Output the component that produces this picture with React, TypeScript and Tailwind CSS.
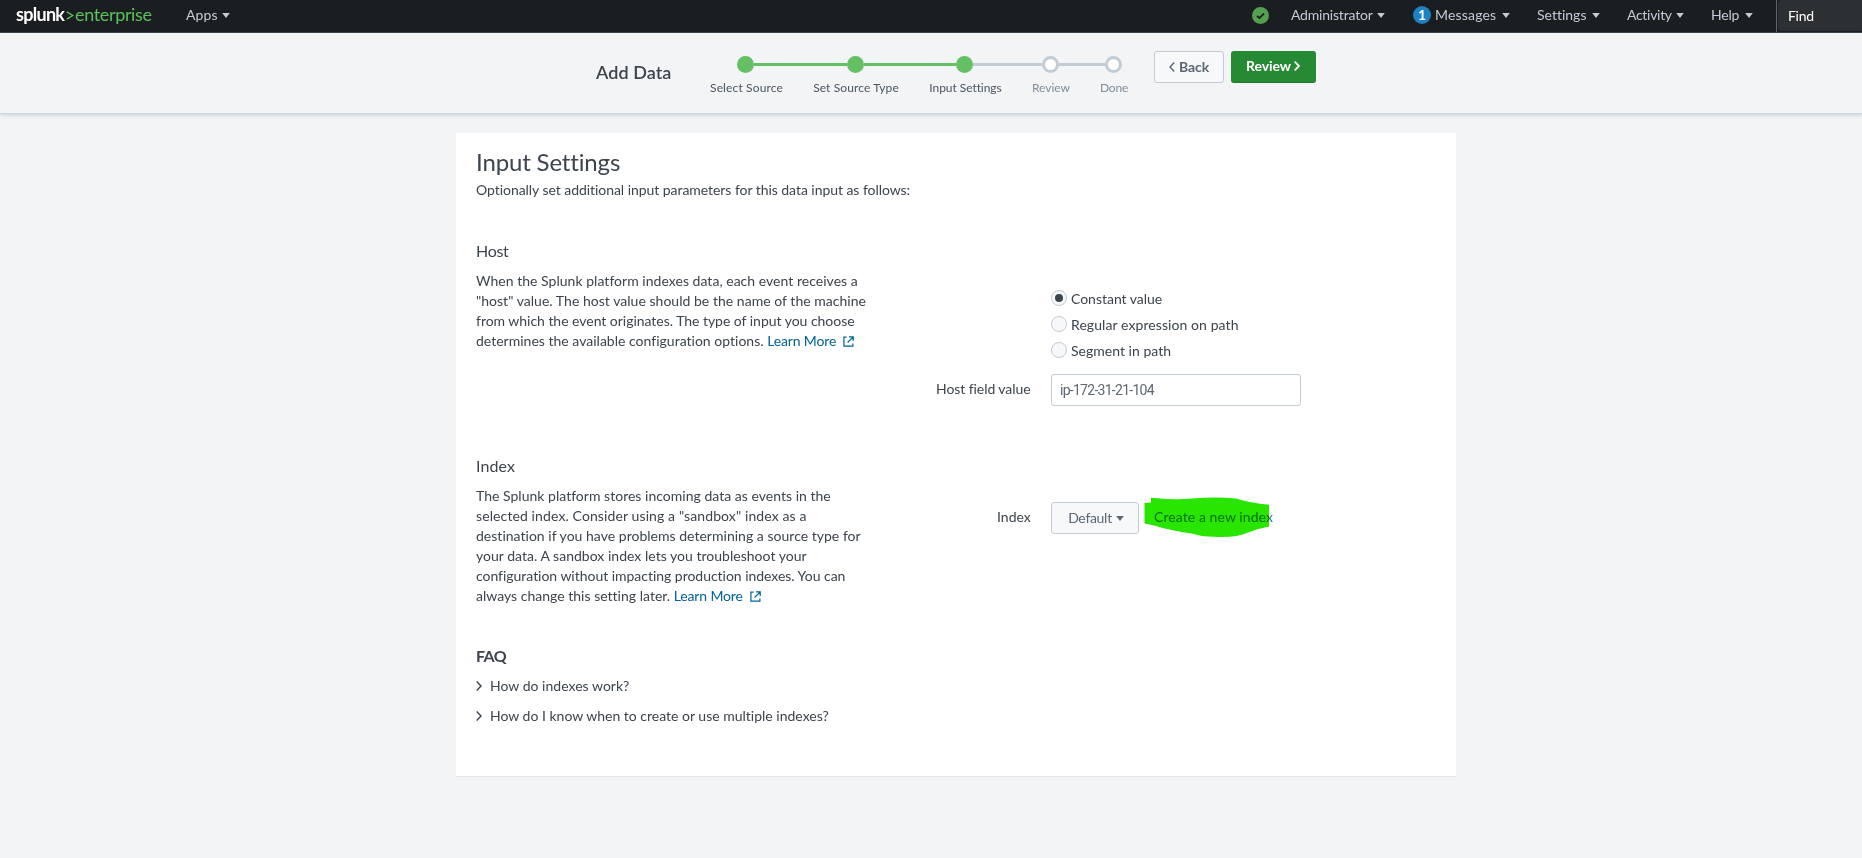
import type { ReactNode } from "react";

function Caret({ className = "" }: { className?: string }) {
  return (
    <svg className={className} width="8" height="5" viewBox="0 0 8 5" fill="currentColor">
      <path d="M0.2 0h7.6L4 5z" />
    </svg>
  );
}

function External() {
  return (
    <svg className="ml-[7px] inline-block align-[-1px]" width="11" height="11" viewBox="0 0 11 11" fill="none" stroke="currentColor" strokeWidth="1.2">
      <path d="M3.6 1.2H0.9v8.9h9V7.4M6 0.9h4.2v4.2M10 1.1L4.6 6.5" />
    </svg>
  );
}

function Chevron({ left = false, className = "", weight = 1.4 }: { left?: boolean; className?: string; weight?: number }) {
  return (
    <svg className={className} width="6" height="10" viewBox="0 0 6 10" fill="none" stroke="currentColor" strokeWidth={weight}>
      <path d={left ? "M5.3 0.6L1 5l4.3 4.4" : "M0.7 0.6L5 5L0.7 9.4"} />
    </svg>
  );
}

function NavItem({ label, className }: { label: string; className: string }) {
  return (
    <div className={`flex items-center justify-between ${className}`}>
      <span className="pb-px">{label}</span>
      <Caret className="text-[#c3cbd4]" />
    </div>
  );
}

function TopBar() {
  return (
    <header className="flex h-[33px] shrink-0 border-b border-[#3c444d] bg-[#1a1e21] text-[14px] text-[#c3cbd4]">
      <div className="flex h-[30px] items-center pl-4">
        <div className="flex items-center text-[18px] leading-none">
          <span className="w-[50px] pb-[3px] font-bold tracking-[-0.72px] text-white">splunk</span>
          <svg className="mr-px" width="8" height="11" viewBox="0 0 9 11" fill="none" stroke="#5cc05c" strokeWidth="1.6">
            <path d="M1 1.4l6.6 4.1L1 9.6" />
          </svg>
          <span className="w-[79px] pb-[3px] tracking-[-0.35px] text-[#5cc05c]">enterprise</span>
        </div>
        <NavItem label="Apps" className="ml-8 w-[44px] tracking-[0.1px]" />
      </div>
      <nav className="ml-auto flex h-[30px] items-center">
        <svg className="mr-[22px]" width="17" height="17" viewBox="0 0 17 17">
          <circle cx="8.5" cy="8.5" r="8.5" fill="#53a051" />
          <path d="M5 8.8l2.5 2.3L12 6.3" fill="none" stroke="#1a1e21" strokeWidth="1.8" />
        </svg>
        <NavItem label="Administrator" className="w-[94px] tracking-[-0.2px]" />
        <span className="ml-7 mr-[4px] flex size-[18px] items-center justify-center rounded-full bg-[#1e81c4] font-bold text-white">1</span>
        <NavItem label="Messages" className="w-[75px] tracking-[0.18px]" />
        <NavItem label="Settings" className="ml-[27px] w-[63px]" />
        <NavItem label="Activity" className="ml-[27px] w-[57px] tracking-[-0.3px]" />
        <NavItem label="Help" className="ml-[27px] w-[42px] tracking-[-0.2px]" />
      </nav>
      <div className="ml-[23px] flex h-8 w-[86px] border-l border-[#5c6773] pb-px pl-px">
        <div className="flex w-full items-center rounded-l-sm bg-[#2c3033] pl-[10px] tracking-[-0.3px] text-white">Find</div>
      </div>
    </header>
  );
}

type StepState = "done" | "current" | "todo";

function Step({ label, state, first, last, className }: { label: string; state: StepState; first?: boolean; last?: boolean; className: string }) {
  const before = first ? "bg-transparent" : state === "todo" ? "bg-[#c3cbd4]" : "bg-[#65c065]";
  const after = last ? "bg-transparent" : state === "done" ? "bg-[#65c065]" : "bg-[#c3cbd4]";
  const dot = state === "todo" ? "border-[3px] border-[#c3cbd4] bg-white" : "bg-[#65c065]";
  return (
    <div className={`flex flex-col items-stretch ${className}`}>
      <div className="flex items-center">
        <span className={`h-[3px] flex-1 ${before}`} />
        <span className={`size-[17px] rounded-full ${dot}`} />
        <span className={`h-[3px] flex-1 ${after}`} />
      </div>
      <span className={`mt-[7px] whitespace-nowrap pl-[2px] text-center text-[12px] leading-4 ${state === "todo" ? "text-[#818d99]" : "text-[#4b5560]"}`}>{label}</span>
    </div>
  );
}

function WizardHeader() {
  return (
    <div className="flex h-[81px] shrink-0 border-b border-[#cdd5dc] bg-[#f2f4f5] shadow-[0_1px_4px_rgba(60,80,100,0.22)]">
      <h1 className="ml-[596px] mt-[27px] w-[98px] text-[18px] font-semibold leading-6 tracking-[0.05px] text-[#3c444d]">Add Data</h1>
      <div className="mt-[23px] flex w-[448px]">
        <Step label="Select Source" state="done" first className="w-[103px] tracking-[0.14px]" />
        <Step label="Set Source Type" state="done" className="w-[116px] tracking-[0.1px]" />
        <Step label="Input Settings" state="current" className="w-[103px] tracking-[-0.06px]" />
        <Step label="Review" state="todo" className="w-[68px]" />
        <Step label="Done" state="todo" last className="w-[58px] tracking-[-0.2px]" />
      </div>
      <div className="ml-3 mt-[18px] flex h-8 gap-[7px] text-[14px] font-bold">
        <button className="flex w-[70px] items-center justify-center gap-[4px] rounded-[3px] border border-[#c3cbd4] bg-[#f7f8fa] pb-px tracking-[-0.1px] text-[#5c6773]">
          <Chevron left />
          Back
        </button>
        <button className="flex w-[85px] items-center justify-center gap-[3px] rounded-[3px] border-b border-[#1f7a2e] bg-[#258a33] pb-px pr-px tracking-[-0.06px] text-white">
          Review
          <Chevron weight={1.8} />
        </button>
      </div>
    </div>
  );
}

function Line({ className = "", children }: { className?: string; children: ReactNode }) {
  return <span className={`block whitespace-nowrap ${className}`}>{children}</span>;
}

function LearnMore() {
  return (
    <a className="tracking-[-0.14px] text-[#006297]">
      Learn More
      <External />
    </a>
  );
}

function Radio({ label, checked, className }: { label: string; checked?: boolean; className: string }) {
  return (
    <label className="flex h-4 items-center gap-1">
      <span className="flex size-4 items-center justify-center rounded-full border border-[#c3cbd4] bg-[#f7f8fa]">
        {checked && <span className="size-2 rounded-full bg-[#3c444d]" />}
      </span>
      <span className={`pt-0.5 ${className}`}>{label}</span>
    </label>
  );
}

export default function App() {
  return (
    <div className="flex h-[858px] w-[1862px] flex-col overflow-hidden bg-[#f2f4f5] font-['Lato',sans-serif] text-[14px] leading-5 text-[#3c444d] [font-variant-ligatures:none]">
      <TopBar />
      <WizardHeader />
      <main className="ml-[456px] mt-[19px] h-[644px] w-[1000px] border-b border-[#e1e6eb] bg-white px-5 pt-[14px]">
        <h2 className="text-[24px] leading-[30px] tracking-[-0.15px]">Input Settings</h2>
        <p className="mt-[3px] tracking-[-0.05px]">Optionally set additional input parameters for this data input as follows:</p>

        <section className="mt-[41px] flex">
          <div className="w-[575px]">
            <h3 className="text-[16px] leading-5 tracking-[-0.3px]">Host</h3>
            <p className="mt-[10px]">
              <Line className="tracking-[0.03px]">When the Splunk platform indexes data, each event receives a</Line>
              <Line className="tracking-[0.03px]">"host" value. The host value should be the name of the machine</Line>
              <Line className="tracking-[-0.03px]">from which the event originates. The type of input you choose</Line>
              <Line className="tracking-[0.01px]">
                determines the available configuration options. <LearnMore />
              </Line>
            </p>
          </div>
          <div className="flex h-[175px] flex-col gap-[10px] pt-[49px]">
            <Radio label="Constant value" checked className="tracking-[-0.02px]" />
            <Radio label="Regular expression on path" className="tracking-[0.08px]" />
            <Radio label="Segment in path" className="tracking-[0.02px]" />
            <div className="-ml-[115px] mt-[6px] flex items-center">
              <span className="w-[115px] pb-[2px] tracking-[-0.07px]">Host field value</span>
              <div className="flex h-8 w-[250px] items-center rounded-[3px] border border-[#c3cbd4] pl-2 font-['Roboto',sans-serif] tracking-[-0.72px] text-[#5c6773]">ip-172-31-21-104</div>
            </div>
          </div>
        </section>

        <section className="mt-[40px] flex">
          <div className="w-[522px]">
            <h3 className="text-[16px] leading-5 tracking-[0.1px]">Index</h3>
            <p className="mt-[10px]">
              <Line className="tracking-[0.02px]">The Splunk platform stores incoming data as events in the</Line>
              <Line className="tracking-[0.11px]">selected index. Consider using a "sandbox" index as a</Line>
              <Line className="tracking-[0.02px]">destination if you have problems determining a source type for</Line>
              <Line className="tracking-[0.02px]">your data. A sandbox index lets you troubleshoot your</Line>
              <Line className="tracking-[-0.03px]">configuration without impacting production indexes. You can</Line>
              <Line className="tracking-[0.01px]">
                always change this setting later. <LearnMore />
              </Line>
            </p>
          </div>
          <div className="mt-[46px] flex h-8 items-center">
            <span className="w-[53px] -translate-x-px pb-[3px]">Index</span>
            <button className="flex h-8 w-[88px] items-center justify-center gap-1 rounded-[3px] border border-[#c3cbd4] bg-[#f7f8fa] pl-0.5 tracking-[-0.3px] text-[#5c6773]">
              Default
              <Caret />
            </button>
            <div className="relative ml-[15px] pb-[3px]">
              <a className="whitespace-nowrap tracking-[0.08px] text-[#1a7a97]">Create a new index</a>
              <svg className="absolute -left-[10px] -top-[10px] mix-blend-multiply" width="126" height="41" viewBox="0 0 126 41" fill="#28e600">
                <path d="M0.5 5.7H7V0.7L14 1.2Q26 3 40 2L60 0.8Q75 -0.3 92 1.5Q106 6 125 7.8V29.5Q114 31.5 104 35.5Q92 41 70 39.8Q56 39.5 50 37Q26 33.5 10 28.5Q4 27 0.5 26.5Z" />
              </svg>
            </div>
          </div>
        </section>

        <section className="mt-[40px]">
          <h3 className="text-[16px] font-bold leading-5 tracking-[-0.6px]">FAQ</h3>
          <ul className="mt-[10px] flex flex-col gap-[10px]">
            <li className="flex items-center gap-[8px] tracking-[0.02px]">
              <Chevron />
              How do indexes work?
            </li>
            <li className="flex items-center gap-[8px]">
              <Chevron />
              How do I know when to create or use multiple indexes?
            </li>
          </ul>
        </section>
      </main>
    </div>
  );
}
